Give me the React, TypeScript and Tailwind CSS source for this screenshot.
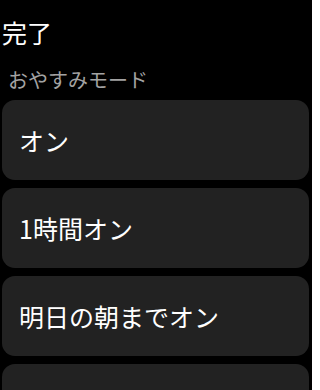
import React from 'react'

const options = ['オン', '1時間オン', '明日の朝までオン', '']

const App: React.FC = () => {
  return (
    <div
      className="h-[390px] w-[312px] overflow-hidden bg-black text-white"
      style={{ fontFamily: '"Noto Sans CJK JP", "Noto Sans", sans-serif' }}
    >
      {/* タイトル */}
      <div className="pl-[2px] pt-[16px] text-[25px] leading-[32px]">完了</div>

      {/* セクション見出し */}
      <div className="mt-[20px] pl-[8px] text-[20px] leading-[24px] text-[#a3a3a3]">おやすみモード</div>

      {/* 選択肢 */}
      <div className="mt-[8px] flex flex-col gap-[8px] pl-[2px] pr-[3px]">
        {options.map((label, i) => (
          <div
            key={i}
            className="flex h-[80px] shrink-0 items-center rounded-[13px] bg-[#222222] pl-[17px] text-[25px] leading-[30px]"
          >
            {label}
          </div>
        ))}
      </div>
    </div>
  )
}

export default App
